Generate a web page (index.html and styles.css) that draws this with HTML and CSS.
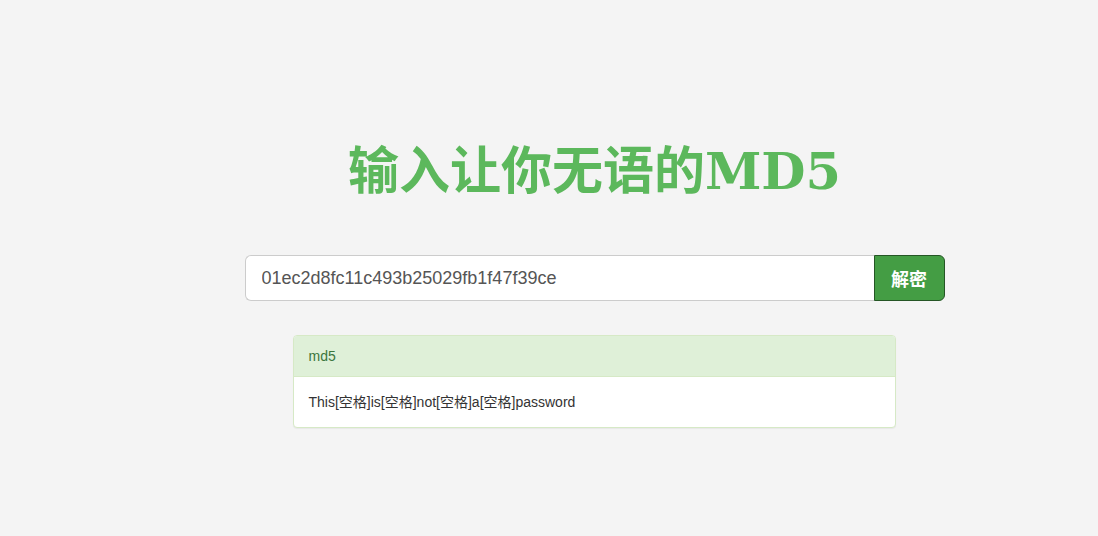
FILE: index.html
```html
<!DOCTYPE html>
<html lang="zh">
<head>
<meta charset="utf-8">
<title>MD5</title>
<link rel="stylesheet" href="styles.css">
</head>
<body>
<div class="page">
  <h1 class="title">输入让你无语的MD5</h1>
  <div class="input-group">
    <input class="md5-input" type="text" value="01ec2d8fc11c493b25029fb1f47f39ce">
    <button class="btn" type="button">解密</button>
  </div>
  <div class="panel">
    <div class="panel-heading">md5</div>
    <div class="panel-body">This[空格]is[空格]not[空格]a[空格]password</div>
  </div>
</div>
</body>
</html>
```
FILE: styles.css
```css
* { box-sizing: border-box; }
html, body { margin: 0; padding: 0; }
body {
  background: #f4f4f4;
  font-family: "Liberation Sans", Arial, "Noto Sans CJK SC", sans-serif;
  font-size: 14px;
  color: #333;
  height: 536px;
}
.page {
  display: flex;
  flex-direction: column;
  align-items: center;
  padding-top: 140px;
  padding-left: 91px;
}
.title {
  margin: 0;
  font-family: "DejaVu Serif", "Noto Sans CJK SC", serif;
  font-weight: bold;
  font-size: 51px;
  line-height: 62px;
  color: #5cb85c;
}
.input-group {
  display: flex;
  width: 700px;
  margin-top: 53px;
}
.md5-input {
  flex: 1;
  height: 46px;
  padding: 10px 16px;
  font-family: "Liberation Sans", Arial, sans-serif;
  font-size: 18px;
  color: #555;
  background: #fff;
  border: 1px solid #ccc;
  border-right: 0;
  border-radius: 6px 0 0 6px;
  outline: none;
}
.btn {
  width: 71px;
  height: 46px;
  font-family: "Noto Sans CJK SC", sans-serif;
  font-size: 18px;
  font-weight: bold;
  color: #fff;
  background: #449d44;
  border: 1px solid #255625;
  border-radius: 0 6px 6px 0;
  padding: 0;
}
.panel {
  width: 603px;
  margin-top: 34px;
  margin-right: 1px;
  background: #fff;
  border: 1px solid #d6e9c6;
  border-radius: 4px;
  box-shadow: 0 1px 1px rgba(0,0,0,.05);
}
.panel-heading {
  background: #dff0d8;
  color: #3c763d;
  padding: 0 15px;
  height: 41px;
  line-height: 41px;
  border-bottom: 1px solid #d6e9c6;
  border-radius: 3px 3px 0 0;
}
.panel-body {
  padding: 15px;
  line-height: 20px;
}
```
